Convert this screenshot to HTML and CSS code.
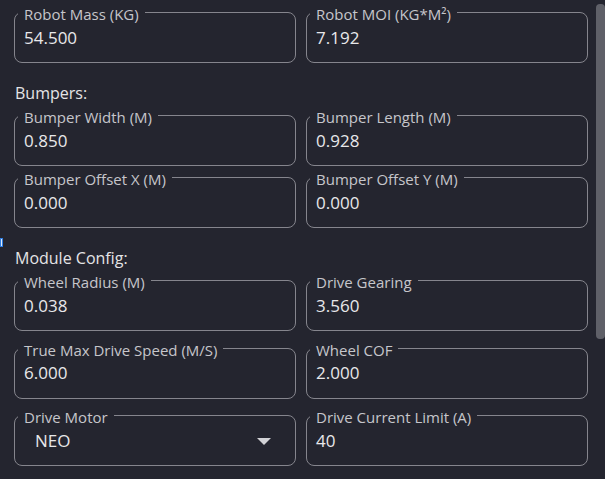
FILE: index.html
```html
<!DOCTYPE html>
<html>
<head>
<meta charset="utf-8">
<link rel="stylesheet" href="styles.css">
</head>
<body>
<div class="page">
  <div class="grid">
    <div class="field"><span class="label">Robot Mass (KG)</span><span class="value">54.500</span></div>
    <div class="field"><span class="label">Robot MOI (KG*M²)</span><span class="value">7.192</span></div>
  </div>

  <div class="heading">Bumpers:</div>
  <div class="grid">
    <div class="field"><span class="label">Bumper Width (M)</span><span class="value">0.850</span></div>
    <div class="field"><span class="label">Bumper Length (M)</span><span class="value">0.928</span></div>
    <div class="field"><span class="label">Bumper Offset X (M)</span><span class="value">0.000</span></div>
    <div class="field"><span class="label">Bumper Offset Y (M)</span><span class="value">0.000</span></div>
  </div>

  <div class="heading">Module Config:</div>
  <div class="grid grid-loose">
    <div class="field"><span class="label">Wheel Radius (M)</span><span class="value">0.038</span></div>
    <div class="field"><span class="label">Drive Gearing</span><span class="value">3.560</span></div>
    <div class="field"><span class="label">True Max Drive Speed (M/S)</span><span class="value">6.000</span></div>
    <div class="field"><span class="label">Wheel COF</span><span class="value">2.000</span></div>
    <div class="field field-select"><span class="label">Drive Motor</span><span class="value">NEO</span><span class="arrow"></span></div>
    <div class="field"><span class="label">Drive Current Limit (A)</span><span class="value">40</span></div>
  </div>
</div>
<div class="focus-mark"></div>
<div class="scrollbar"></div>
</body>
</html>
```

FILE: styles.css
```css
html, body {
  margin: 0;
  padding: 0;
  background: #24252f;
  width: 605px;
  height: 479px;
  overflow: hidden;
  font-family: "Open Sans", "Noto Sans", sans-serif;
}

.page {
  width: 574px;
  padding: 12px 0 0 14px;
}

.grid {
  display: grid;
  grid-template-columns: 1fr 1fr;
  column-gap: 10px;
  row-gap: 11px;
}

.grid-loose {
  row-gap: 16.5px;
}

.field {
  position: relative;
  box-sizing: border-box;
  height: 51px;
  border: 1px solid #85858d;
  border-radius: 8px;
  display: flex;
  align-items: center;
  padding: 0 12px 0 9px;
}

.label {
  position: absolute;
  top: -9px;
  left: 3px;
  padding: 0 6px 0 6px;
  background: #24252f;
  color: #c6c6cb;
  font-size: 15px;
  line-height: 20px;
  white-space: nowrap;
}

.value {
  color: #e8e8ea;
  font-size: 17px;
  line-height: 22px;
}

.field-select {
  padding-left: 20px;
}

.arrow {
  margin-left: auto;
  margin-right: 12px;
  margin-top: 1px;
  width: 0;
  height: 0;
  border-left: 7px solid transparent;
  border-right: 7px solid transparent;
  border-top: 7px solid #d2d2d6;
}

.heading {
  color: #e4e4e6;
  font-size: 16px;
  line-height: 22px;
  margin: 19px 0 11px 1px;
}

.focus-mark {
  position: absolute;
  left: 0;
  top: 238px;
  width: 1px;
  height: 7px;
  border: 1px solid #2f7de0;
  background: #dfe9f7;
}

.scrollbar {
  position: absolute;
  left: 596px;
  top: 4px;
  width: 9px;
  height: 335px;
  border-radius: 4px;
  background: #5f6068;
}
```
